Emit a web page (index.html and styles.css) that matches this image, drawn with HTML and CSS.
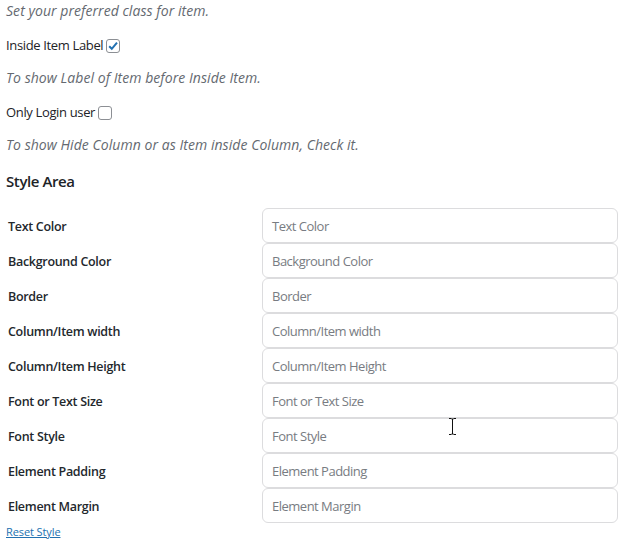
FILE: index.html
```html
<!DOCTYPE html>
<html>
<head>
<meta charset="utf-8">
<link rel="stylesheet" href="styles.css">
</head>
<body>
<div class="page">
  <p class="desc">Set your preferred class for item.</p>
  <div class="opt">Inside Item Label <span class="cb checked"><svg viewBox="0 0 14 14" width="14" height="14"><path d="M3.2 7.2 L5.8 9.8 L11 3.6" fill="none" stroke="#2271b1" stroke-width="2"/></svg></span></div>
  <p class="desc">To show Label of Item before Inside Item.</p>
  <div class="opt">Only Login user <span class="cb"></span></div>
  <p class="desc">To show Hide Column or as Item inside Column, Check it.</p>
  <h3 class="heading">Style Area</h3>
  <div class="grid">
    <div class="lbl">Text Color</div><div class="inp">Text Color</div>
    <div class="lbl">Background Color</div><div class="inp">Background Color</div>
    <div class="lbl">Border</div><div class="inp">Border</div>
    <div class="lbl">Column/Item width</div><div class="inp">Column/Item width</div>
    <div class="lbl">Column/Item Height</div><div class="inp">Column/Item Height</div>
    <div class="lbl">Font or Text Size</div><div class="inp">Font or Text Size</div>
    <div class="lbl">Font Style</div><div class="inp">Font Style</div>
    <div class="lbl">Element Padding</div><div class="inp">Element Padding</div>
    <div class="lbl">Element Margin</div><div class="inp">Element Margin</div>
  </div>
  <a class="reset" href="#">Reset Style</a>
</div>
<svg class="cursor" width="9" height="17" viewBox="0 0 9 17"><path d="M1 0.5 H3.5 M5.5 0.5 H8 M4.5 1 V16 M1 16.5 H3.5 M5.5 16.5 H8 M3.5 1 H5.5 M3.5 16 H5.5" stroke="#111" stroke-width="1" fill="none"/></svg>
</body>
</html>
```
FILE: styles.css
```css
html, body { margin: 0; padding: 0; background: #fff; }
body {
  font-family: "Open Sans", "Noto Sans", sans-serif;
  font-size: 13px;
  color: #1d2327;
  position: relative;
  width: 624px;
  height: 544px;
  overflow: hidden;
}
.page { padding: 0 0 0 6px; }
.desc {
  margin: 0;
  height: 34px;
  line-height: 21px;
  font-style: italic;
  color: #646970;
  font-size: 14px;
  letter-spacing: 0.05px;
}
.opt {
  height: 33px;
  line-height: 23px;
  display: flex;
  align-items: flex-start;
  gap: 3px;
  letter-spacing: -0.35px;
}
.cb {
  display: inline-block;
  width: 12px;
  height: 12px;
  border: 1px solid #8c8f94;
  border-radius: 3px;
  margin-top: 5px;
  position: relative;
  box-sizing: content-box;
}
.cb svg { position: absolute; left: -1px; top: -1px; }
.heading {
  margin: 0;
  font-size: 15px;
  font-weight: 600;
  line-height: 20px;
  height: 35px;
  padding-top: 3px;
  box-sizing: border-box;
  margin-bottom: 5px;
  color: #1d2327;
  letter-spacing: -0.4px;
}
.grid {
  display: grid;
  grid-template-columns: 256px 356px;
  grid-auto-rows: 35px;
}
.lbl {
  padding-left: 2px;
  padding-top: 1px;
  font-weight: 600;
  font-size: 12.5px;
  letter-spacing: -0.3px;
  line-height: 35px;
  color: #23282d;
}
.inp {
  box-sizing: border-box;
  border: 1px solid #dcdcde;
  border-radius: 6px;
  height: 35px;
  line-height: 33px;
  padding-left: 9px;
  padding-top: 1px;
  color: #787c82;
  font-size: 13px;
  letter-spacing: -0.5px;
}
.reset {
  display: block;
  color: #2271b1;
  font-size: 11px;
  line-height: 18px;
  margin-top: 0;
  letter-spacing: -0.1px;
}
.cursor { position: absolute; left: 448px; top: 418px; }
```
